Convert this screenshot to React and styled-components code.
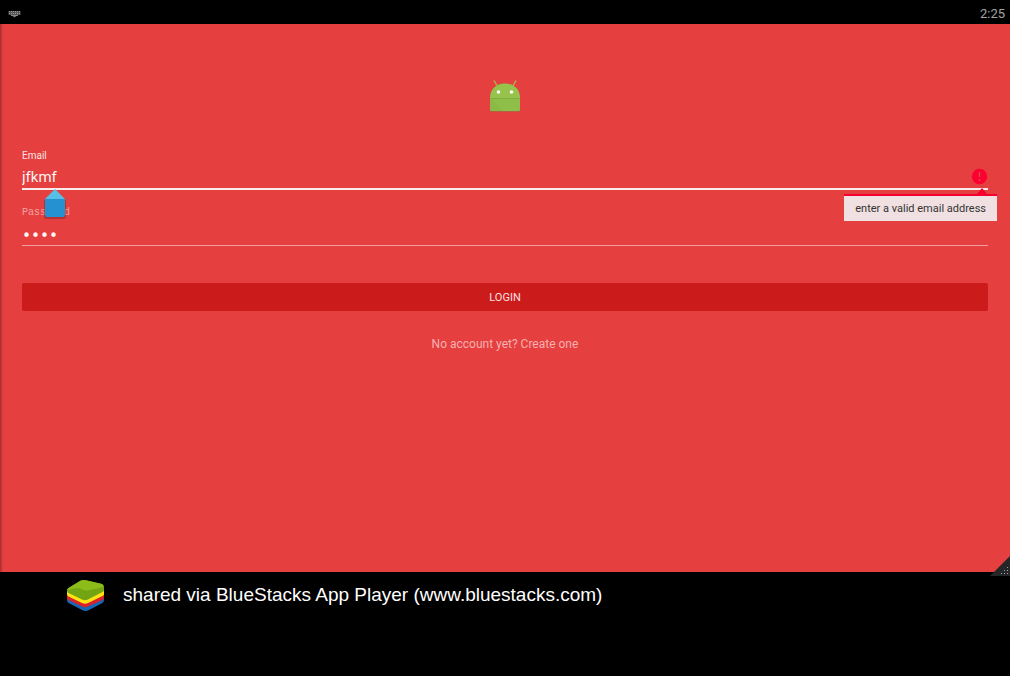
import React from "react";
import styled, { createGlobalStyle } from "styled-components";

const GlobalStyle = createGlobalStyle`
  * { box-sizing: border-box; }
  body { margin: 0; background: #000; font-family: Roboto, sans-serif; }
`;

const Page = styled.div`
  display: flex;
  flex-direction: column;
  min-height: 100vh;
`;

const StatusBar = styled.header`
  display: flex;
  align-items: center;
  justify-content: space-between;
  height: 24px;
  padding: 4px 5px 0 8px;
  color: #a3a3a3;
  font-size: 13px;
  line-height: 20px;
`;

const Screen = styled.main`
  position: relative;
  flex: 1;
  padding: 54px 22px 0;
  background: linear-gradient(to right, #a82c2c, #e53f3f 3px);
`;

const Logo = styled.svg`
  display: block;
  margin: 0 auto 36px;
`;

const Field = styled.div`
  position: relative;
  display: flex;
  flex-direction: column;
  height: 57px;
`;

const Label = styled.label`
  color: ${(p) => (p.$mono ? "#f1a3a3" : "#fbe3e3")};
  font-family: ${(p) => (p.$mono ? '"Liberation Mono", monospace' : "inherit")};
  font-size: 10px;
  line-height: 12px;
`;

const Input = styled.input`
  width: 100%;
  height: ${(p) => (p.$active ? "28px" : "27px")};
  margin: 0;
  padding: ${(p) => (p.$active ? "3px 0 0" : "8px 0 0")};
  border: 0;
  border-bottom: ${(p) => (p.$active ? "2px solid #fbeaea" : "1px solid #f0a0a0")};
  border-radius: 0;
  outline: 0;
  background: transparent;
  color: #fff3f3;
  font-family: ${(p) => (p.type === "password" ? '"DejaVu Sans Mono", monospace' : "Roboto, sans-serif")};
  font-size: 15px;
  line-height: 18px;
`;

const ErrorIcon = styled.svg`
  position: absolute;
  top: 18px;
  right: 0;
`;

const ErrorBubble = styled.div`
  position: absolute;
  z-index: 1;
  top: 44px;
  right: -9px;
  padding: 5px 11px 4px;
  border-top: 2px solid #f5002e;
  background: #f0e0e1;
  color: #333;
  font-size: 11px;
  line-height: 16px;

  &::before {
    content: "";
    position: absolute;
    top: -8px;
    right: 10px;
    border: 5px solid transparent;
    border-top: 0;
    border-bottom: 6px solid #f5002e;
  }
`;

const CursorHandle = styled.svg`
  position: absolute;
  z-index: 1;
  top: 38px;
  left: 20px;
`;

const LoginButton = styled.button`
  display: block;
  width: 100%;
  height: 28px;
  margin-top: 19px;
  padding: 0;
  border: 0;
  border-radius: 2px;
  background: #cc1b1b;
  color: #fae0e0;
  font-family: inherit;
  font-size: 11px;
`;

const SignUp = styled.a`
  display: block;
  width: fit-content;
  margin: 25px auto 0;
  color: #f6b0b0;
  font-size: 12px;
  line-height: 16px;
  text-decoration: none;
`;

const Corner = styled.svg`
  position: absolute;
  right: 0;
  bottom: -4px;
`;

const Footer = styled.footer`
  display: flex;
  align-items: flex-start;
  gap: 18px;
  height: 104px;
  padding: 6px 66px;
  color: #fff;
  font-family: "Liberation Sans", sans-serif;
  font-size: 19px;
  line-height: 34px;
`;

export default function App() {
  return (
    <Page>
      <GlobalStyle />
      <StatusBar>
        <svg width="13" height="8" viewBox="0 0 13 8" aria-hidden="true">
          <path d="M.5 1h12v4h-12z" fill="#555" />
          <path d="M1 1.500h11M1 3.500h11" stroke="#999" strokeDasharray="1 1" />
          <path d="M3 5.500h7" stroke="#888" />
          <path d="M4.500 6h4L6.500 7.500z" fill="#777" />
        </svg>
        <time>2:25</time>
      </StatusBar>
      <Screen>
        <Logo width="36" height="36" viewBox="0 0 36 36" role="img" aria-label="Android">
          <path d="M7 2.500l4 7M29 2.500l-4 7" stroke="#b0ae4c" strokeWidth="1.500" />
          <path d="M3 34V20C3 11 9 5.500 18 5.500S33 11 33 20v14z" fill="#94774a" opacity=".6" />
          <path d="M3 20C3 11 9 5.500 18 5.500S33 11 33 20z" fill="#97c24c" />
          <path d="M3 20h30v11.500q0 1.500-1.500 1.500h-27Q3 33 3 31.500z" fill="#8fbf48" />
          <path d="M3 20l13 13H4.500Q3 33 3 31.500z" fill="#83b342" opacity=".4" />
          <path d="M3 20.500h30" stroke="#7fae40" />
          <circle cx="11.500" cy="14" r="1.800" fill="#fff" />
          <circle cx="24.500" cy="14" r="1.800" fill="#fff" />
        </Logo>
        <form onSubmit={(e) => e.preventDefault()}>
          <Field>
            <Label htmlFor="email">Email</Label>
            <Input id="email" type="text" defaultValue="jfkmf" $active aria-invalid="true" aria-describedby="email-error" />
            <ErrorIcon width="17" height="17" viewBox="0 0 17 17" aria-hidden="true">
              <circle cx="8.500" cy="8.500" r="7.700" fill="#fb0030" />
              <path d="M8.500 4v5M8.500 11v2" stroke="#dc493f" strokeWidth="1.500" />
            </ErrorIcon>
            <ErrorBubble id="email-error" role="alert">enter a valid email address</ErrorBubble>
            <CursorHandle width="26" height="32" viewBox="0 0 26 32" aria-hidden="true">
              <path d="M2 12h22v17q0 2-2 2H4q-2 0-2-2z" fill="#7d2525" opacity=".45" />
              <path d="M3 11L13 1l10 10z" fill="#55bfe6" />
              <path d="M3 11h20v16q0 2-2 2H5q-2 0-2-2z" fill="#2591d1" />
            </CursorHandle>
          </Field>
          <Field>
            <Label htmlFor="password" $mono>Password</Label>
            <Input id="password" type="password" defaultValue="1234" />
          </Field>
          <LoginButton type="submit">LOGIN</LoginButton>
        </form>
        <SignUp href="#signup">No account yet? Create one</SignUp>
        <Corner width="20" height="20" viewBox="0 0 20 20" aria-hidden="true">
          <path d="M20 0v20H0z" fill="#242627" />
          <path d="M17 11h1v1h-1zM14 14h1v1h-1zM17 14h1v1h-1zM11 17h1v1h-1zM14 17h1v1h-1zM17 17h1v1h-1z" fill="#9aa5a5" />
        </Corner>
      </Screen>
      <Footer>
        <svg width="39" height="34" viewBox="0 0 39 34" role="img" aria-label="BlueStacks">
          <path d="M1 18l17 6 20-8v6q0 2-1.500 3L23 32q-3.500 2-7 0L2.500 25Q1 24 1 22z" fill="#1766b5" />
          <path d="M1 16l17 6 20-8v5.500q0 1.500-1.500 2.500L22 28.500q-3 1.500-6 0L2.500 22Q1 21 1 19.500z" fill="#d9232b" />
          <path d="M1 12l17 6 20-8v6q0 1.500-1.500 2L22 25q-3 1.500-6 0L2.500 18.500Q1 17.500 1 16z" fill="#ffe414" />
          <path d="M1 12.500Q1 11 2.500 10L14 3q3-1.700 7-.5l15 3.500q2 1 2 3.500v2q0 2-1.500 2.500L22 21.500q-3 1.500-6 0L2.500 15Q1 14.500 1 12.500z" fill="#72a414" />
          <path d="M1 12Q1 11 2.500 10L14 3q3-1.700 7-.5l15 3.500q2 1 1.500 3L24 12q-3 1-6 0L12 10z" fill="#8cbc1a" />
        </svg>
        <span>shared via BlueStacks App Player (www.bluestacks.com)</span>
      </Footer>
    </Page>
  );
}
